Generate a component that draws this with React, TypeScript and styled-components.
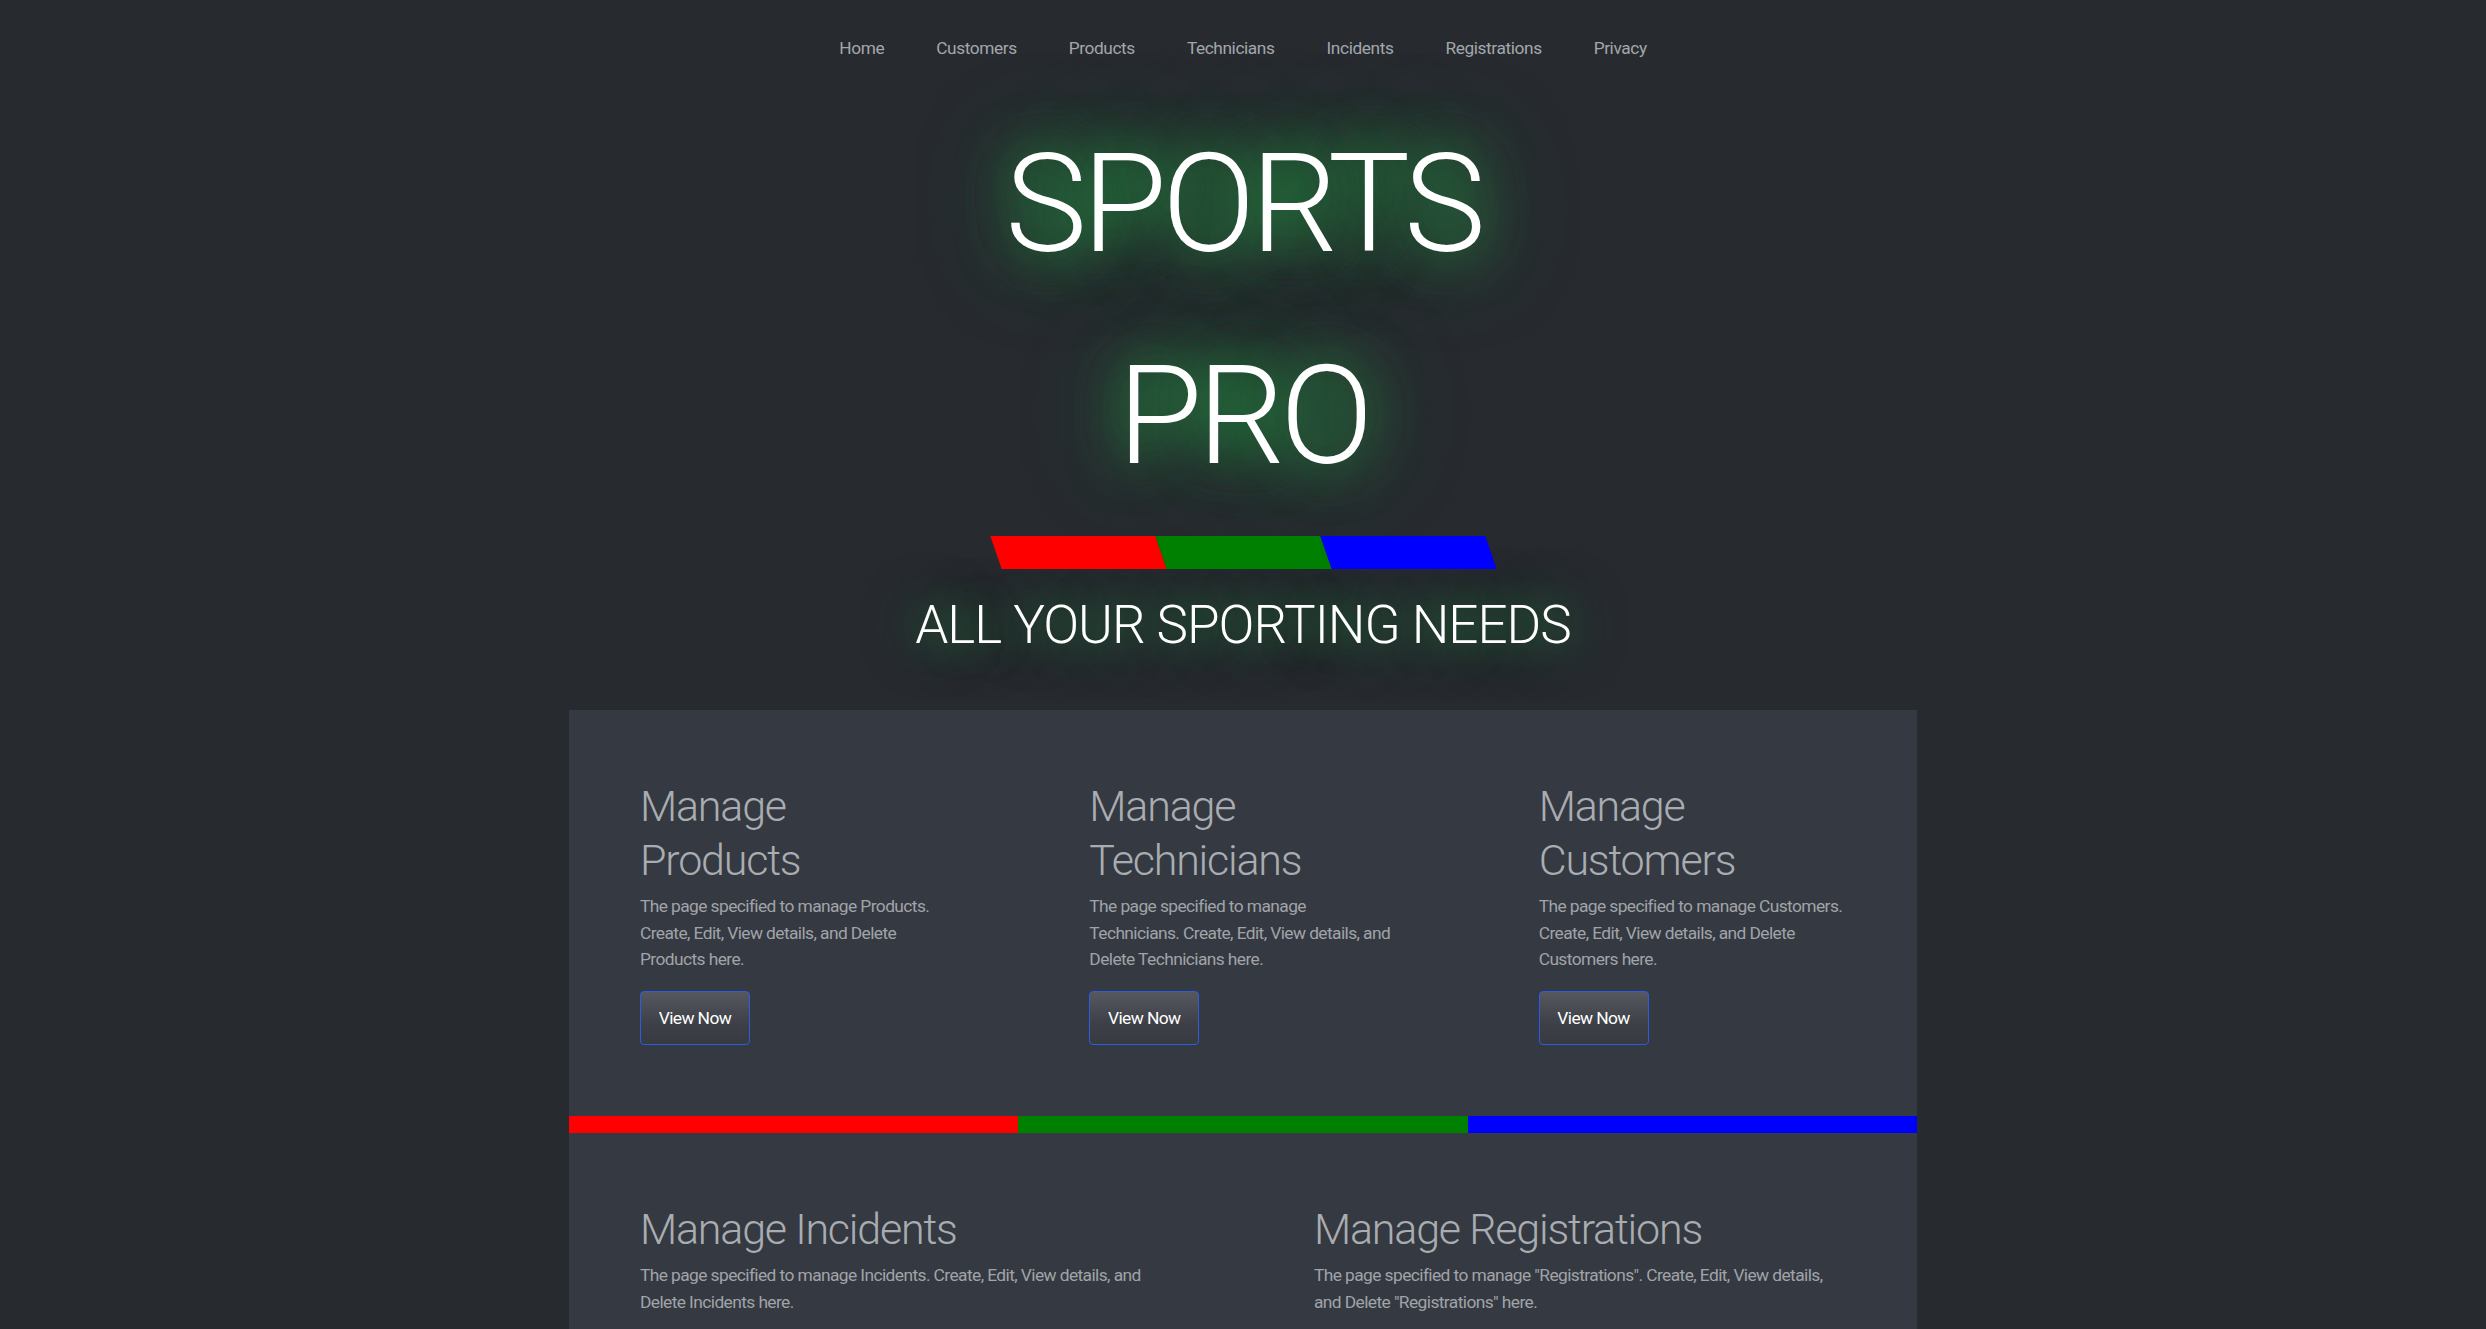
import React from "react";
import styled, { createGlobalStyle } from "styled-components";

const FONT = `Roboto, "Open Sans", "DejaVu Sans", sans-serif`;

const GlobalStyle = createGlobalStyle`
  html, body {
    margin: 0;
    padding: 0;
    background: #272b30;
  }
  body {
    font-family: ${FONT};
    color: #a4a8ad;
  }
  * { box-sizing: border-box; }
`;

const Page = styled.div`
  min-height: 1329px;
  background: #272b30;
  display: flex;
  flex-direction: column;
  align-items: center;
`;

const Nav = styled.nav`
  display: flex;
  justify-content: center;
  gap: 52px;
  padding-top: 35px;
`;

const NavLink = styled.a`
  font-family: ${FONT};
  font-size: 17.3px;
  font-weight: 400;
  letter-spacing: -0.4px;
  line-height: 26.4px;
  color: #a3a7ac;
  text-decoration: none;
`;

const Hero = styled.header`
  display: flex;
  flex-direction: column;
  align-items: center;
`;

const Title = styled.h1`
  margin: 36.5px 0 0;
  font-family: ${FONT};
  font-weight: 300;
  font-size: 138px;
  letter-spacing: -5px;
  line-height: 212px;
  color: #ffffff;
  text-align: center;
  text-shadow: 0 0 55px rgba(40, 150, 70, 0.95), 0 0 55px rgba(40, 150, 70, 0.9),
    0 0 95px rgba(40, 150, 70, 0.6);
`;

const TitleLine = styled.span`
  display: block;
`;

const SkewBar = styled.div`
  display: flex;
  margin-top: 14px;
  height: 33px;
`;

const SkewSegment = styled.div<{ $color: string }>`
  width: 165px;
  height: 100%;
  background: ${(p) => p.$color};
  transform: skewX(19deg);
`;

const Tagline = styled.h2`
  margin: 23.3px 0 0;
  font-family: ${FONT};
  font-weight: 300;
  font-size: 53px;
  letter-spacing: -1px;
  line-height: 67.2px;
  color: #ffffff;
  text-shadow: 0 0 35px rgba(40, 150, 70, 0.8), 0 0 60px rgba(40, 150, 70, 0.5);
`;

const Panel = styled.main`
  margin-top: 50.5px;
  width: 1348px;
  background: #353941;
  display: flex;
  flex-direction: column;
`;

const CardRow = styled.section<{ $cols: number }>`
  display: grid;
  grid-template-columns: repeat(${(p) => p.$cols}, 1fr);
  padding: 70px 0 71px;
`;

const Card = styled.div`
  padding: 0 71px;
`;

const CardTitle = styled.h3`
  margin: 0;
  font-family: ${FONT};
  font-weight: 300;
  font-size: 43px;
  letter-spacing: -1.2px;
  line-height: 53.76px;
  color: #a9adb1;
`;

const CardText = styled.p`
  margin: 5.7px 0 0;
  font-family: ${FONT};
  font-weight: 400;
  font-size: 17.4px;
  letter-spacing: -0.6px;
  line-height: 26.4px;
  color: #a0a4a9;
`;

const ViewButton = styled.a`
  display: inline-block;
  margin-top: 18.6px;
  padding: 11.6px 17.7px;
  font-family: ${FONT};
  font-weight: 400;
  font-size: 17.4px;
  letter-spacing: -0.6px;
  line-height: 28.8px;
  color: #ffffff;
  text-decoration: none;
  border: 1px solid #2e5be3;
  border-radius: 4px;
  background: linear-gradient(#55585e, #3d4046 60%, #373a40);
`;

const ColorStripe = styled.div`
  display: flex;
  height: 17px;
`;

const StripeSegment = styled.div<{ $color: string }>`
  flex: 1;
  background: ${(p) => p.$color};
`;

const navItems = [
  "Home",
  "Customers",
  "Products",
  "Technicians",
  "Incidents",
  "Registrations",
  "Privacy",
];

const topCards = [
  {
    title: "Manage Products",
    text: "The page specified to manage Products. Create, Edit, View details, and Delete Products here.",
  },
  {
    title: "Manage Technicians",
    text: "The page specified to manage Technicians. Create, Edit, View details, and Delete Technicians here.",
  },
  {
    title: "Manage Customers",
    text: "The page specified to manage Customers. Create, Edit, View details, and Delete Customers here.",
  },
];

const bottomCards = [
  {
    title: "Manage Incidents",
    text: "The page specified to manage Incidents. Create, Edit, View details, and Delete Incidents here.",
  },
  {
    title: "Manage Registrations",
    text: 'The page specified to manage "Registrations". Create, Edit, View details, and Delete "Registrations" here.',
  },
];

const colors = ["#ff0000", "#008000", "#0000ff"];

export default function App() {
  return (
    <Page>
      <GlobalStyle />
      <Nav>
        {navItems.map((n) => (
          <NavLink key={n} href="#">
            {n}
          </NavLink>
        ))}
      </Nav>
      <Hero>
        <Title>
          <TitleLine>SPORTS</TitleLine>
          <TitleLine>PRO</TitleLine>
        </Title>
        <SkewBar>
          {colors.map((c) => (
            <SkewSegment key={c} $color={c} />
          ))}
        </SkewBar>
        <Tagline>ALL YOUR SPORTING NEEDS</Tagline>
      </Hero>
      <Panel>
        <CardRow $cols={3}>
          {topCards.map((c) => (
            <Card key={c.title}>
              <CardTitle>{c.title}</CardTitle>
              <CardText>{c.text}</CardText>
              <ViewButton href="#">View Now</ViewButton>
            </Card>
          ))}
        </CardRow>
        <ColorStripe>
          {colors.map((c) => (
            <StripeSegment key={c} $color={c} />
          ))}
        </ColorStripe>
        <CardRow $cols={2}>
          {bottomCards.map((c) => (
            <Card key={c.title}>
              <CardTitle>{c.title}</CardTitle>
              <CardText>{c.text}</CardText>
              <ViewButton href="#">View Now</ViewButton>
            </Card>
          ))}
        </CardRow>
      </Panel>
    </Page>
  );
}
